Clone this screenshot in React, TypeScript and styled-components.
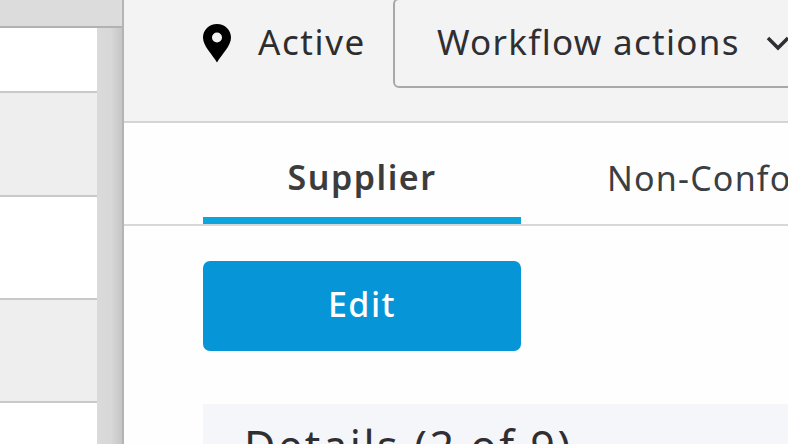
import React from "react";
import styled, { createGlobalStyle } from "styled-components";

const Global = createGlobalStyle`
  html, body { margin: 0; padding: 0; width: 788px; height: 444px; overflow: hidden; background: #fff; }
  body { font-family: "Noto Sans", "Open Sans", sans-serif; }
`;

const Page = styled.div`
  display: flex;
  width: 788px;
  height: 444px;
  overflow: hidden;
`;

const ListPane = styled.aside`
  width: 122px;
  flex: none;
  display: flex;
  flex-direction: column;
  border-right: 2px solid #b4b4b4;
`;

const ListTop = styled.div`
  height: 26px;
  flex: none;
  background: #dcdcdc;
  border-bottom: 2px solid #b2b2b2;
`;

const ListBody = styled.div`
  flex: 1;
  display: flex;
  min-height: 0;
`;

const Rows = styled.div`
  width: 97px;
  flex: none;
  display: flex;
  flex-direction: column;
  overflow: hidden;
`;

const Row = styled.div<{ $shaded?: boolean; $height: number }>`
  height: ${(p) => p.$height}px;
  flex: none;
  background: ${(p) => (p.$shaded ? "#eeeeee" : "#ffffff")};
  border-bottom: 2px solid #c9c9c9;
`;

const Scrollbar = styled.div`
  flex: 1;
  background: linear-gradient(to right, #dadada 0%, #d8d8d8 55%, #c6c6c6 100%);
`;

const Main = styled.main`
  flex: 1;
  min-width: 0;
  display: flex;
  flex-direction: column;
  background: #fefefe;
`;

const Header = styled.header`
  height: 121px;
  flex: none;
  display: flex;
  align-items: flex-start;
  padding-left: 78px;
  background: #f3f3f3;
  border-bottom: 2px solid #d4d4d4;
  white-space: nowrap;
`;

const Status = styled.div`
  display: flex;
  align-items: center;
  height: 82px;
  gap: 26px;
  margin-right: 27px;
  font-size: 35px;
  letter-spacing: 1.6px;
  color: #2d2d2d;
`;

const Pin = styled.svg`
  margin-top: 4px;
`;

const ActionsButton = styled.button`
  flex: none;
  display: flex;
  align-items: center;
  gap: 26px;
  height: 90px;
  width: 420px;
  margin-top: -2px;
  padding: 0 0 4px 42px;
  box-sizing: border-box;
  border: 2px solid #a8a8a8;
  border-radius: 6px;
  background: #f3f3f3;
  font: inherit;
  font-size: 35px;
  letter-spacing: 1.3px;
  color: #2f2f33;
`;

const Chevron = styled.svg`
  margin-top: 5px;
`;

const Tabs = styled.nav`
  height: 101px;
  flex: none;
  display: flex;
  align-items: stretch;
  padding-left: 79px;
  border-bottom: 2px solid #d8d8d8;
  white-space: nowrap;
`;

const Tab = styled.div<{ $active?: boolean }>`
  flex: none;
  width: 318px;
  margin-right: ${(p) => (p.$active ? "86px" : "0")};
  display: flex;
  align-items: center;
  justify-content: ${(p) => (p.$active ? "center" : "flex-start")};
  padding-top: ${(p) => (p.$active ? "13px" : "9px")};
  box-sizing: border-box;
  font-size: 34px;
  letter-spacing: ${(p) => (p.$active ? "1.5px" : "1.2px")};
  font-weight: ${(p) => (p.$active ? 600 : 400)};
  color: ${(p) => (p.$active ? "#3c3c3c" : "#3a3f44")};
  border-bottom: ${(p) => (p.$active ? "7px solid #0ea5dc" : "none")};
`;

const Content = styled.section`
  flex: 1;
  min-height: 0;
  padding: 35px 0 0 79px;
  overflow: hidden;
`;

const EditButton = styled.button`
  display: block;
  width: 318px;
  height: 90px;
  padding: 0 0 4px;
  border: 0;
  border-radius: 7px;
  background: #0696d7;
  color: #ffffff;
  font: inherit;
  font-size: 34px;
  letter-spacing: 1.5px;
  font-weight: 500;
`;

const DetailsPanel = styled.div`
  margin-top: 53px;
  height: 80px;
  padding: 17px 0 0 41px;
  background: #f5f6f9;
  font-size: 43px;
  letter-spacing: 2.6px;
  line-height: 50px;
  color: #2f2f33;
  white-space: nowrap;
`;

const rows = [
  { h: 63, s: false },
  { h: 102, s: true },
  { h: 101, s: false },
  { h: 101, s: true },
  { h: 60, s: false },
];

export default function App() {
  return (
    <Page>
      <Global />
      <ListPane>
        <ListTop />
        <ListBody>
          <Rows>
            {rows.map((r, i) => (
              <Row key={i} $height={r.h} $shaded={r.s} />
            ))}
          </Rows>
          <Scrollbar />
        </ListBody>
      </ListPane>
      <Main>
        <Header>
          <Status>
            <Pin width="30" height="40" viewBox="0 0 30 40" aria-hidden="true">
              <path
                fillRule="evenodd"
                d="M15 1C7 1 1 7 1 14.500C1 23 10 31 15 39.500C20 31 29 23 29 14.500C29 7 23 1 15 1ZM15 9.500A5 5 0 1 1 15 19.500A5 5 0 1 1 15 9.500Z"
                fill="#000"
              />
            </Pin>
            Active
          </Status>
          <ActionsButton>
            Workflow actions
            <Chevron width="24" height="16" viewBox="0 0 24 16" aria-hidden="true">
              <path d="M2 2L12 12L22 2" fill="none" stroke="#2f2f33" strokeWidth="3.500" />
            </Chevron>
          </ActionsButton>
        </Header>
        <Tabs>
          <Tab $active>Supplier</Tab>
          <Tab>Non-Conformance</Tab>
        </Tabs>
        <Content>
          <EditButton>Edit</EditButton>
          <DetailsPanel>Details (2 of 9)</DetailsPanel>
        </Content>
      </Main>
    </Page>
  );
}
